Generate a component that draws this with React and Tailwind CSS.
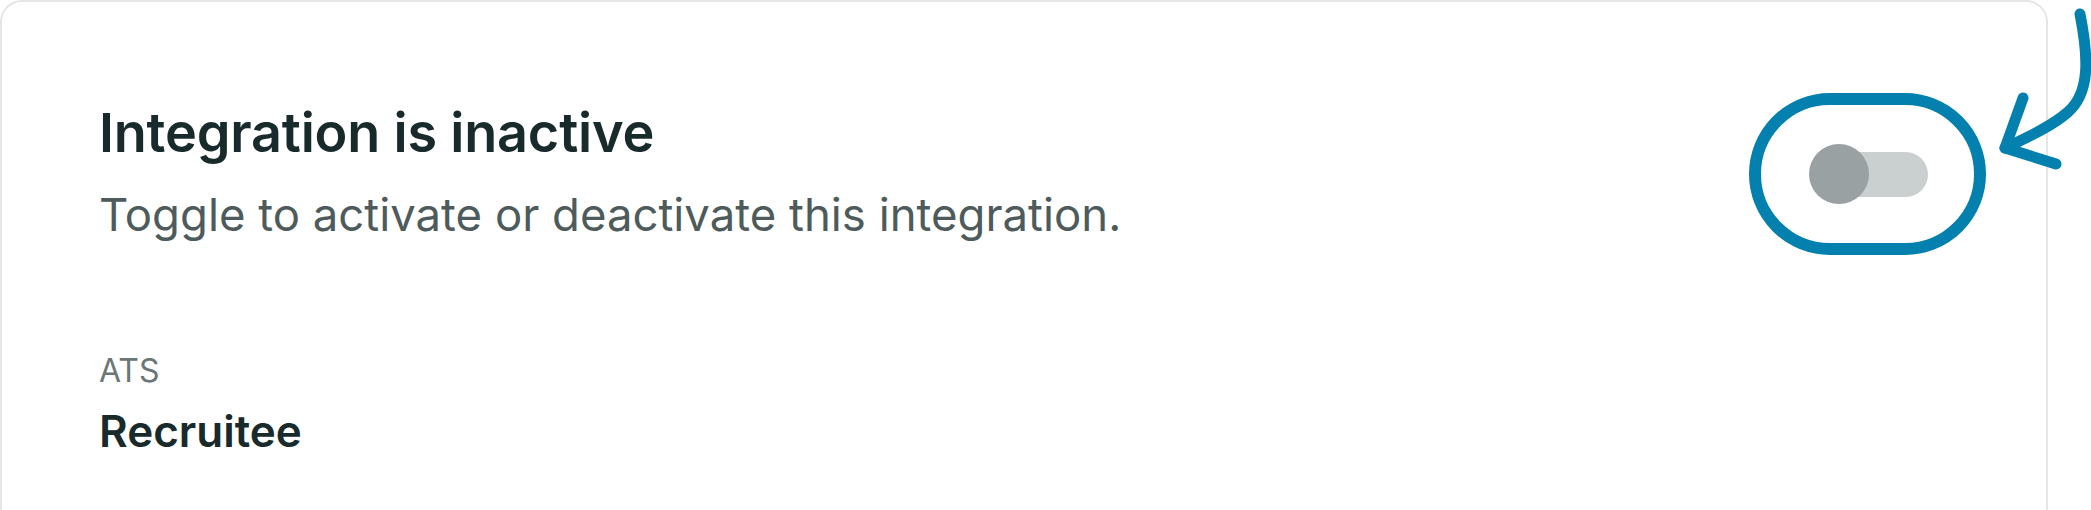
import React, { useState } from 'react';

const Annotation = () => (
    <svg
        className="absolute left-0 top-0 pointer-events-none"
        width="2091"
        height="510"
        viewBox="0 0 2091 510"
        fill="none"
    >
        {/* circle drawn round the switch */}
        <rect x="1755" y="99" width="225" height="150" rx="75" stroke="#0380ad" strokeWidth="12" />
        {/* hand drawn arrow */}
        <path
            d="M2080 14 C2088 55 2091 92 2068 112 C2052 126 2030 136 2005 148"
            stroke="#0380ad"
            strokeWidth="11"
            strokeLinecap="round"
        />
        <path
            d="M2023 98 L2005 148 L2056 164"
            stroke="#0380ad"
            strokeWidth="11"
            strokeLinecap="round"
            strokeLinejoin="round"
        />
    </svg>
);

const Switch = ({ checked, onChange }) => (
    <button
        type="button"
        role="switch"
        aria-checked={checked}
        onClick={() => onChange(!checked)}
        className="relative mt-[43px] w-[119px] h-[60px] shrink-0 flex items-center"
    >
        <span className="absolute left-[21px] right-0 h-[45px] rounded-full bg-[#cacfcf]"></span>
        <span className="relative w-[60px] h-[60px] rounded-full bg-[#9aa1a2]"></span>
    </button>
);

export default function App() {
    const [active, setActive] = useState(false);

    return (
        <div className="relative w-[2091px] h-[510px] overflow-hidden bg-white font-['Inter',sans-serif]">
            <div className="w-[2048px] min-h-[600px] border-2 border-[#e4e6e6] rounded-[22px] pt-[99px] pl-[97px] pr-[118px]">
                <div className="flex justify-between items-start">
                    <div>
                        <h2 className="text-[54px] leading-[64px] font-semibold text-[#182a2c] tracking-[-0.2px]">
                            Integration is inactive
                        </h2>
                        <p className="mt-[22px] text-[45.5px] leading-[56px] text-[#4e5b5c]">
                            Toggle to activate or deactivate this integration.
                        </p>
                    </div>
                    <Switch checked={active} onChange={setActive} />
                </div>

                <div className="mt-[108px]">
                    <p className="text-[32px] leading-[40px] text-[#6b7677]">ATS</p>
                    <p className="mt-[14px] text-[44px] leading-[52px] font-semibold text-[#182a2c]">Recruitee</p>
                </div>
            </div>
            <Annotation />
        </div>
    );
}
